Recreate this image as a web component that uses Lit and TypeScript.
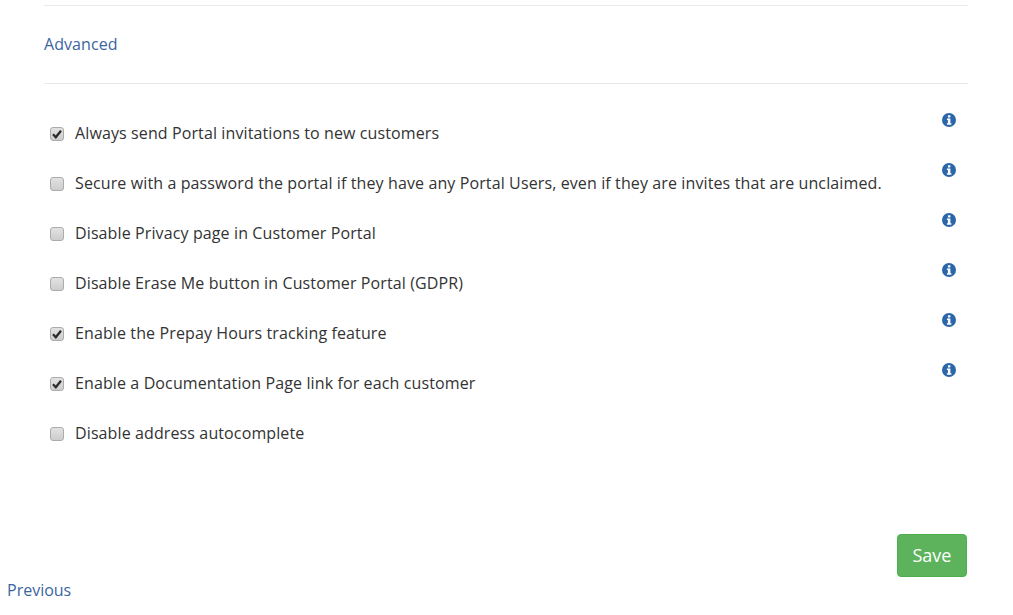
import { LitElement, html, css, svg } from "lit";
import { customElement } from "lit/decorators.js";

const ROWS: [string, boolean, boolean][] = [
  ["Always send Portal invitations to new customers", true, true],
  ["Secure with a password the portal if they have any Portal Users, even if they are invites that are unclaimed.", false, true],
  ["Disable Privacy page in Customer Portal", false, true],
  ["Disable Erase Me button in Customer Portal (GDPR)", false, true],
  ["Enable the Prepay Hours tracking feature", true, true],
  ["Enable a Documentation Page link for each customer", true, true],
  ["Disable address autocomplete", false, false],
];

const infoIcon = svg`<svg class="info" viewBox="0 0 14 14" width="14" height="14" aria-hidden="true">
  <circle cx="7" cy="7" r="7" fill="#2a66a8"></circle>
  <rect x="5.9" y="2.2" width="2.5" height="2.3" rx=".4" fill="#fff"></rect>
  <path d="M4.9 5.6h3.5v4.7h1v1.5H4.9v-1.5h1V7.1h-1z" fill="#fff"></path>
</svg>`;

@customElement("app-root")
export class AppRoot extends LitElement {
  static styles = css`
    :host {
      display: block;
      height: 615px;
      overflow: hidden;
      background: #fff;
      font-family: "Open Sans", sans-serif;
      font-size: 16px;
      color: #333;
    }
    .page {
      display: flex;
      flex-direction: column;
      padding: 5px 45px 0 44px;
    }
    .rule {
      height: 1px;
      background: #e9e9e9;
    }
    a {
      color: #3c659f;
      text-decoration: none;
    }
    .advanced {
      height: 75px;
      padding-bottom: 2px;
      display: flex;
      align-items: center;
      line-height: 22px;
      letter-spacing: 0.06px;
    }
    .rows {
      display: flex;
      flex-direction: column;
      padding-top: 25px;
    }
    .row {
      height: 50px;
      display: flex;
      justify-content: space-between;
      padding-left: 6px;
      padding-right: 12px;
    }
    label {
      display: flex;
      align-items: center;
      gap: 11px;
      height: 50px;
      line-height: 22px;
    }
    .text {
      margin-bottom: 2px;
      letter-spacing: 0.115px;
    }
    .box {
      width: 14px;
      height: 14px;
      box-sizing: border-box;
      border: 1px solid #ababab;
      border-radius: 3px;
      background: linear-gradient(#e2e2e2, #cdcdcd);
      display: flex;
      align-items: center;
      justify-content: center;
      flex: none;
    }
    .info {
      display: block;
      margin-top: 4px;
    }
    .actions {
      display: flex;
      justify-content: flex-end;
      padding-top: 75px;
      padding-right: 1px;
    }
    .save {
      width: 70px;
      height: 43px;
      box-sizing: border-box;
      border: 1px solid #4cae4c;
      border-radius: 4px;
      background: #5cb35c;
      color: #fff;
      font: 18px "Open Sans", sans-serif;
      padding: 0 0 2px;
    }
    .prev {
      display: block;
      padding-left: 7px;
      margin-top: 2px;
      line-height: 22px;
    }
  `;

  render() {
    return html`
      <div class="page">
        <div class="rule"></div>
        <div class="advanced"><a href="#">Advanced</a></div>
        <div class="rule"></div>
        <div class="rows">
          ${ROWS.map(
            ([text, on, info]) => html`
              <div class="row">
                <label>
                  <span class="box">
                    ${on
                      ? svg`<svg width="10" height="10" viewBox="0 0 10 10"><path d="M1 5.2 3.8 8.2 9 1.8" fill="none" stroke="#2b2b2b" stroke-width="2.3"></path></svg>`
                      : ""}
                  </span>
                  <span class="text">${text}</span>
                </label>
                ${info ? infoIcon : ""}
              </div>
            `
          )}
        </div>
        <div class="actions"><button class="save">Save</button></div>
      </div>
      <a class="prev" href="#">Previous</a>
    `;
  }
}
